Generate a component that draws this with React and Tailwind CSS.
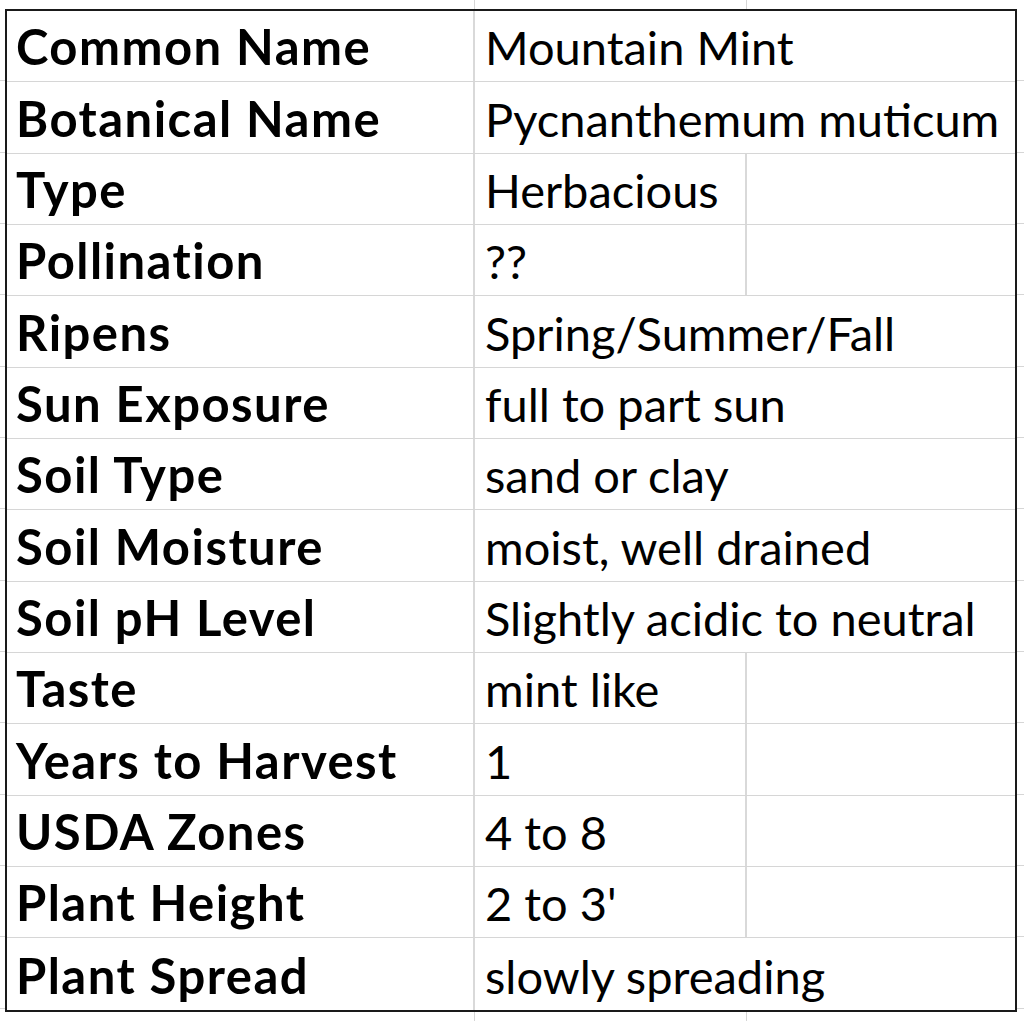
const ROWS = [
  ['Common Name', 'Mountain Mint', true],
  ['Botanical Name', 'Pycnanthemum muticum', true],
  ['Type', 'Herbacious', false],
  ['Pollination', '??', false],
  ['Ripens', 'Spring/Summer/Fall', true],
  ['Sun Exposure', 'full to part sun', true],
  ['Soil Type', 'sand or clay', true],
  ['Soil Moisture', 'moist, well drained', true],
  ['Soil pH Level', 'Slightly acidic to neutral', true],
  ['Taste', 'mint like', false],
  ['Years to Harvest', '1', false],
  ['USDA Zones', '4 to 8', false],
  ['Plant Height', "2 to 3'", false],
  ['Plant Spread', 'slowly spreading', true],
];

const font = { fontFamily: 'Lato, "Open Sans", sans-serif' };

function Strip({ height }) {
  return (
    <div className={`flex ${height}`}>
      <div className="w-[6px] shrink-0" />
      <div className="w-[469px] shrink-0 border-r border-[#d6d6d6]" />
      <div className="w-[272px] shrink-0 border-r border-[#d6d6d6]" />
      <div className="w-[270px] shrink-0" />
      <div className="flex-1" />
    </div>
  );
}

export default function App() {
  return (
    <div className="w-[1024px] h-[1021px] bg-white overflow-hidden text-black" style={font}>
      <Strip height="h-[10px]" />
      <div className="flex">
        <div className="w-[6px] shrink-0 flex flex-col">
          {ROWS.map(([label]) => (
            <div key={label} className="h-[71.35px] border-b border-[#d6d6d6]" />
          ))}
        </div>
        <div className="w-[1012px] shrink-0 border-2 border-[#1a1a1a] -ml-[1px] -mt-[1px]">
          {ROWS.map(([label, value, wide], i) => (
            <div
              key={label}
              className={`flex h-[71.35px] ${i < ROWS.length - 1 ? 'border-b border-[#d6d6d6]' : ''}`}
            >
              <div className="w-[468px] shrink-0 border-r-2 border-[#d9d9d9] flex items-end pl-[9px] pb-[10px]">
                <span className="text-[49px] font-bold leading-none tracking-[0.03em] whitespace-nowrap">{label}</span>
              </div>
              {wide ? (
                <div className="flex-1 flex items-end pl-[10px] pb-[10px] overflow-visible">
                  <span className="text-[47px] leading-none whitespace-nowrap">{value}</span>
                </div>
              ) : (
                <>
                  <div className="w-[272px] shrink-0 border-r-2 border-[#d9d9d9] flex items-end pl-[10px] pb-[10px]">
                    <span className="text-[47px] leading-none whitespace-nowrap">{value}</span>
                  </div>
                  <div className="flex-1" />
                </>
              )}
            </div>
          ))}
        </div>
        <div className="flex-1 flex flex-col">
          {ROWS.map(([label]) => (
            <div key={label} className="h-[71.35px] border-b border-[#d6d6d6]" />
          ))}
        </div>
      </div>
      <Strip height="h-[20px]" />
    </div>
  );
}
